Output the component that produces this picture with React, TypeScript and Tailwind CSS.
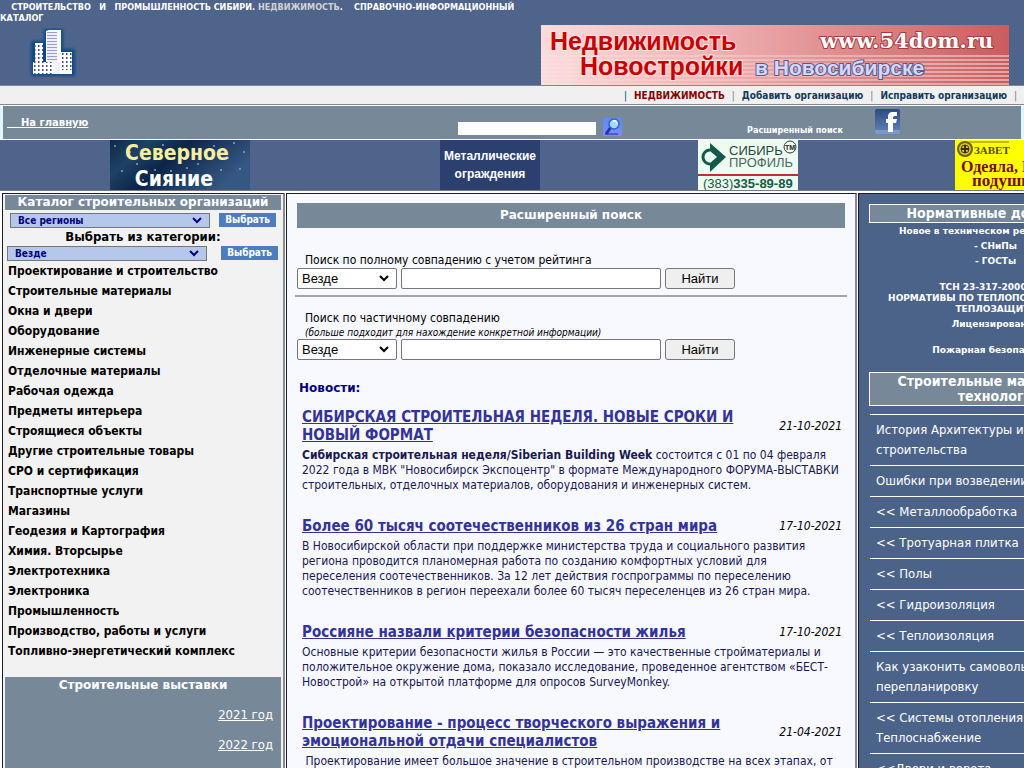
import type { ReactNode } from "react";

const CATEGORIES = [
  "Проектирование и строительство",
  "Строительные материалы",
  "Окна и двери",
  "Оборудование",
  "Инженерные системы",
  "Отделочные материалы",
  "Рабочая одежда",
  "Предметы интерьера",
  "Строящиеся объекты",
  "Другие строительные товары",
  "СРО и сертификация",
  "Транспортные услуги",
  "Магазины",
  "Геодезия и Картография",
  "Химия. Вторсырье",
  "Электротехника",
  "Электроника",
  "Промышленность",
  "Производство, работы и услуги",
  "Топливно-энергетический комплекс",
];

const NEWS: { title: string; date: string; body: ReactNode }[] = [
  {
    title: "СИБИРСКАЯ СТРОИТЕЛЬНАЯ НЕДЕЛЯ. НОВЫЕ СРОКИ И НОВЫЙ ФОРМАТ",
    date: "21-10-2021",
    body: (
      <>
        <b>Сибирская строительная неделя/Siberian Building Week</b> состоится с 01 по 04 февраля
        2022 года в МВК "Новосибирск Экспоцентр" в формате Международного ФОРУМА-ВЫСТАВКИ
        строительных, отделочных материалов, оборудования и инженерных систем.
      </>
    ),
  },
  {
    title: "Более 60 тысяч соотечественников из 26 стран мира",
    date: "17-10-2021",
    body: "В Новосибирской области при поддержке министерства труда и социального развития региона проводится планомерная работа по созданию комфортных условий для переселения соотечественников. За 12 лет действия госпрограммы по переселению соотечественников в регион переехали более 60 тысяч переселенцев из 26 стран мира.",
  },
  {
    title: "Россияне назвали критерии безопасности жилья",
    date: "17-10-2021",
    body: "Основные критерии безопасности жилья в России — это качественные стройматериалы и положительное окружение дома, показало исследование, проведенное агентством «БЕСТ-Новострой» на открытой платформе для опросов SurveyMonkey.",
  },
  {
    title: "Проектирование - процесс творческого выражения и эмоциональной отдачи специалистов",
    date: "21-04-2021",
    body: "\u00a0Проектирование имеет большое значение в строительном производстве на всех этапах, от",
  },
];

const MATERIALS = [
  "История Архитектуры и строительства",
  "Ошибки при возведении",
  "<< Металлообработка",
  "<< Тротуарная плитка",
  "<< Полы",
  "<< Гидроизоляция",
  "<< Теплоизоляция",
  "Как узаконить самовольную перепланировку",
  "<< Системы отопления. Теплоснабжение",
  "<<Двери и ворота",
];

function CityLogo() {
  return (
    <svg width="48" height="50" viewBox="0 0 48 50" aria-hidden="true">
      <defs>
        <filter id="glow" x="-20%" y="-20%" width="140%" height="140%">
          <feGaussianBlur stdDeviation="1.6" />
        </filter>
        <pattern id="win" width="4" height="4" patternUnits="userSpaceOnUse">
          <rect width="4" height="4" fill="#fff" />
          <rect x="1" y="1" width="1.5" height="2" fill="#4a4e80" />
        </pattern>
        <pattern id="floors" width="3" height="3" patternUnits="userSpaceOnUse">
          <rect width="3" height="3" fill="#eef" />
          <rect y="1" width="3" height="1" fill="#9aa0cc" />
        </pattern>
      </defs>
      <path d="M2 13h13V1h19v20h12v27H2z" fill="#084a84" filter="url(#glow)" />
      <rect x="6" y="15" width="8" height="20" fill="url(#win)" />
      <path d="M17 3l3-1h12v44H17z" fill="#fff" />
      <rect x="18" y="4" width="10" height="31" fill="url(#floors)" />
      <path d="M31 24h12v22H31z" fill="url(#win)" />
      <path d="M31 42h12v4H31z" fill="#fff" />
      <path d="M4 34h20v12H4z" fill="url(#win)" />
      <path d="M24 34h7v12h-7z" fill="#f3f3ff" />
    </svg>
  );
}

function DomBanner() {
  return (
    <svg width="468" height="60" viewBox="0 0 468 60" role="img" aria-label="www.54dom.ru">
      <defs>
        <linearGradient id="pink">
          <stop offset="0" stopColor="#fbdcdc" />
          <stop offset=".35" stopColor="#f0b4b4" />
          <stop offset="1" stopColor="#ca5c5e" />
        </linearGradient>
        <linearGradient id="stripe">
          <stop offset="0" stopColor="#fff" stopOpacity=".1" />
          <stop offset="1" stopColor="#fff" stopOpacity=".45" />
        </linearGradient>
      </defs>
      <rect width="468" height="60" fill="url(#pink)" />
      {[30, 34, 38, 42, 46, 50, 54, 58].map((y) => (
        <rect key={y} y={y} width="468" height="2" fill="url(#stripe)" />
      ))}
      <g fontFamily="Liberation Sans, sans-serif" fontWeight="700">
        <g fill="#c80000" stroke="#fbe4e4" strokeWidth="2" paintOrder="stroke" fontSize="25">
          <text x="9" y="25">Недвижимость</text>
          <text x="39" y="50">Новостройки</text>
        </g>
        <text x="214" y="50" fontSize="21" fill="#d4d8fa" stroke="#555b92" strokeWidth="2" paintOrder="stroke">
          в Новосибирске
        </text>
      </g>
      <text x="279" y="23" fontFamily="DejaVu Serif, serif" fontWeight="700" fontSize="21" fill="#fff" stroke="#a33b40" strokeWidth="2" paintOrder="stroke">
        www.54dom.ru
      </text>
    </svg>
  );
}

function NorthBanner() {
  const stars = [
    [5, 6], [12, 31], [20, 12], [33, 40], [45, 30], [61, 31], [77, 28], [70, 8], [88, 24],
    [96, 36], [104, 6], [111, 30], [118, 18], [124, 3], [130, 29], [134, 12], [27, 24], [53, 5],
  ];
  return (
    <svg width="140" height="50" viewBox="0 0 140 50" role="img" aria-label="Северное Сияние">
      <defs>
        <linearGradient id="night" x2="1" y2=".4">
          <stop offset="0" stopColor="#102844" />
          <stop offset=".25" stopColor="#1d4265" />
          <stop offset=".5" stopColor="#0d2448" />
          <stop offset="1" stopColor="#355783" />
        </linearGradient>
      </defs>
      <rect width="140" height="50" fill="url(#night)" />
      {stars.map(([x, y]) => (
        <circle key={`${x}-${y}`} cx={x} cy={y} r="1" fill="#86a5c9" />
      ))}
      <g fontFamily="DejaVu Sans Condensed, DejaVu Sans, sans-serif" fontWeight="700" fontSize="21" textAnchor="middle">
        <text x="67" y="20" fill="#f8eda0">Северное</text>
        <text x="64" y="46" fill="#fff">Сияние</text>
      </g>
    </svg>
  );
}

function ProfileBanner() {
  return (
    <svg width="100" height="50" viewBox="0 0 100 50" role="img" aria-label="Сибирь Профиль">
      <rect width="100" height="50" fill="#edfcf0" />
      <path d="M12 3l16 14-16 15z" fill="#155a48" />
      <circle cx="12" cy="17" r="7" fill="none" stroke="#155a48" strokeWidth="3" />
      <path d="M12 11l7 6-7 6z" fill="#edfcf0" />
      <g fontFamily="Liberation Sans, sans-serif">
        <text x="31" y="15" fontSize="13" fill="#27483e">СИБИРЬ</text>
        <text x="31" y="27" fontSize="13" fill="#4b675e">ПРОФИЛЬ</text>
        <circle cx="92" cy="7" r="6" fill="#edfcf0" stroke="#333" />
        <text x="92" y="10" fontSize="7" fontWeight="700" textAnchor="middle" fill="#222">TM</text>
        <rect y="34" width="100" height="2" fill="#c92b2e" />
        <text x="5" y="48" fontSize="13" fill="#155a48">
          (383)<tspan fontWeight="700">335-89-89</tspan>
        </text>
      </g>
    </svg>
  );
}

function ZavetBanner() {
  return (
    <svg width="100" height="50" viewBox="0 0 100 50" role="img" aria-label="Завет">
      <rect width="100" height="50" fill="#ff0" />
      <circle cx="10" cy="9" r="7" fill="#d8c820" stroke="#6e5c14" strokeWidth="2" />
      <circle cx="10" cy="9" r="4" fill="none" stroke="#4a3c10" />
      <path d="M10 5v8M6 9h8" stroke="#3a2c08" strokeWidth="2" />
      <path d="M14 2h40" stroke="#8a7a18" />
      <g fontFamily="Liberation Serif, serif" fontWeight="700" fill="#7a0a0a">
        <text x="19" y="14" fontSize="11" fill="#5a4614">ЗАВЕТ</text>
        <text x="6" y="32" fontSize="16">Одеяла, КПБ</text>
        <text x="17" y="46" fontSize="17">подушки</text>
      </g>
    </svg>
  );
}

function FacebookIcon() {
  return (
    <svg width="25" height="25" viewBox="0 0 25 25" aria-hidden="true">
      <defs>
        <linearGradient id="fb" x2="0" y2="1">
          <stop offset="0" stopColor="#2d4a80" />
          <stop offset="1" stopColor="#6584bd" />
        </linearGradient>
      </defs>
      <rect width="25" height="25" rx="2" fill="url(#fb)" />
      <path d="M0 21h25v2a2 2 0 0 1-2 2H2a2 2 0 0 1-2-2z" fill="#7c98c9" />
      <path d="M13 23v-9h-2v-4h2V8c0-4 2-5 5-5h4v4h-2c-2 0-2 1-2 2v1h4l-1 4h-3v9z" fill="#fff" />
    </svg>
  );
}

function LensIcon() {
  return (
    <svg width="19" height="18" viewBox="0 0 19 18" aria-hidden="true">
      <defs>
        <linearGradient id="lens" x2="0" y2="1">
          <stop offset="0" stopColor="#5b8cf0" />
          <stop offset="1" stopColor="#7c8cf8" />
        </linearGradient>
      </defs>
      <rect width="19" height="18" fill="url(#lens)" />
      <path d="M2 16h13" stroke="#4c5bd0" strokeWidth="2" />
      <path d="M8 9l-5 7" stroke="#2634a0" strokeWidth="3" />
      <circle cx="11" cy="6" r="5" fill="#9fd8fa" stroke="#3460cc" strokeWidth="1.5" />
      <path d="M10 3c3-1 4 1 4 3" stroke="#fff" strokeWidth="1.5" fill="none" />
    </svg>
  );
}

function Chevron({ className }: { className: string }) {
  return (
    <svg className={className} width="10" height="7" viewBox="0 0 10 7" aria-hidden="true">
      <path d="M1 1l4 4 4-4" fill="none" stroke="currentColor" strokeWidth="2" />
    </svg>
  );
}

function RegionPicker({ label, value, className }: { label: string; value: string; className: string }) {
  return (
    <form className={className}>
      <div className="relative text-[#000080]">
        <select
          aria-label={label}
          className="block h-[15px] w-[200px] appearance-none border border-[#767676] bg-[#b5c7ea] pl-1 pr-6 text-[10px] leading-[13px] font-bold indent-[3px]"
        >
          <option>{value}</option>
        </select>
        <Chevron className="pointer-events-none absolute top-1 right-2" />
      </div>
      <button type="button" className="h-[14px] w-[57px] bg-[#4d7dbf] text-[10px] leading-[14px] font-bold text-white">
        Выбрать
      </button>
    </form>
  );
}

function SearchForm({ label }: { label: string }) {
  return (
    <form className="flex gap-1 pl-[2px] font-['Liberation_Sans',sans-serif] text-[13px]">
      <div className="relative">
        <select
          aria-label={`Раздел: ${label}`}
          className="block h-[21px] w-[100px] appearance-none rounded-[2px] border border-[#767676] bg-white pl-1 leading-[19px]"
        >
          <option>Везде</option>
        </select>
        <Chevron className="pointer-events-none absolute top-[7px] right-2" />
      </div>
      <input aria-label={label} className="h-[21px] w-[260px] rounded-[2px] border border-[#767676] bg-white px-1" />
      <button type="button" className="h-[21px] w-[70px] rounded-[3px] border border-[#767676] bg-[#efefef] leading-[19px]">
        Найти
      </button>
    </form>
  );
}

function SidePanel() {
  return (
    <aside className="flex flex-col border-t border-r-2 border-l border-t-[#1c1c2c] border-r-[#8a8a92] border-l-[#1c1c2c] bg-[#f2f2f2] px-[2px] pt-px">
      <h2 className="bg-[#778899] text-center font-['DejaVu_Sans',sans-serif] text-[12px] leading-[15px] font-bold text-white">
        Каталог строительных организаций
      </h2>
      <RegionPicker label="Регион" value="Все регионы" className="flex gap-[9px] pt-[3px] pl-[5px]" />
      <p className="text-center text-[13px] leading-[18px] font-bold">Выбрать из категории:</p>
      <RegionPicker label="Категория" value="Везде" className="flex gap-[14px] pl-[2px]" />
      <ul className="pl-[3px] text-[12px] leading-5 font-bold">
        {CATEGORIES.map((c) => (
          <li key={c}>
            <a href="#">{c}</a>
          </li>
        ))}
      </ul>
      <section className="mt-4 flex-1 bg-[#778899] text-white">
        <h2 className="text-center font-['DejaVu_Sans',sans-serif] text-[12px] leading-4 font-bold">
          Строительные выставки
        </h2>
        <ul className="pt-[7px] pr-2 text-right text-[13px] leading-[30px] underline">
          <li>
            <a href="#">2021 год</a>
          </li>
          <li>
            <a href="#">2022 год</a>
          </li>
        </ul>
      </section>
    </aside>
  );
}

function Content() {
  return (
    <main className="border-t border-r-2 border-l border-t-[#1c1c2c] border-r-[#8a8a92] border-l-[#1c1c2c] bg-[#f8f8ff] px-2 pt-[9px] text-[12px]">
      <h1 className="mx-[2px] bg-[#778899] text-center font-['DejaVu_Sans',sans-serif] leading-[25px] font-bold text-white">
        Расширенный поиск
      </h1>
      <p className="pt-[25px] pl-[10px] leading-[15px]">Поиск по полному совпадению с учетом рейтинга</p>
      <SearchForm label="Поиск по полному совпадению" />
      <hr className="mt-[6px] border-t-2 border-[#a4a4aa]" />
      <p className="pt-[14px] pl-[10px] leading-[15px]">Поиск по частичному совпадению</p>
      <p className="pl-[10px] text-[10px] leading-[13px] italic">
        (больше подходит для нахождение конкретной информации)
      </p>
      <SearchForm label="Поиск по частичному совпадению" />
      <h2 className="mt-5 mb-3 pl-1 font-['DejaVu_Sans',sans-serif] leading-4 font-bold text-[#000080]">Новости:</h2>
      <div className="flex flex-col gap-6 pr-[5px] pl-[7px]">
        {NEWS.map((n) => (
          <article key={n.title}>
            <div className="flex items-center justify-between">
              <h3 className="w-[450px] text-[15px] leading-[18px] font-bold text-[#333399]">
                <a href="#" className="underline">
                  {n.title}
                </a>
              </h3>
              <time className="text-[12px] italic">{n.date}</time>
            </div>
            <p className="mt-1 text-[12px] leading-[15px] text-[#191950]">{n.body}</p>
          </article>
        ))}
      </div>
    </main>
  );
}

function RightPanel() {
  return (
    <aside className="border-t border-l border-[#1c1c2c] bg-[#4c6389] px-[10px] pt-[10px] text-white">
      <h2 className="border border-white bg-[#778899] text-center text-[14px] leading-[17px] font-bold">
        Нормативные документы
      </h2>
      <div className="pt-px pr-2 text-center font-['DejaVu_Sans',sans-serif] text-[9px] leading-[15px] font-bold">
        <p>Новое в техническом регулировании</p>
        <p>- СНиПы</p>
        <p>- ГОСТы</p>
        <p className="pt-[13px] pb-[2px] leading-[11px]">
          ТСН 23-317-2000 НСО
          <br />
          НОРМАТИВЫ ПО ТЕПЛОПОТРЕБЛЕНИЮ И
          <br />
          ТЕПЛОЗАЩИТЕ
        </p>
        <p>Лицензирование</p>
        <p className="pt-[11px]">Пожарная безопасность</p>
      </div>
      <h2 className="mt-[14px] mb-2 border border-white bg-[#778899] px-4 py-px text-center text-[14px] leading-[15px] font-bold">
        Строительные материалы и
        <br />
        технологии
      </h2>
      <ul className="ml-px text-[13px] leading-5">
        {MATERIALS.map((m) => (
          <li key={m} className="border-t border-white py-[5px] pr-[54px] pl-[6px]">
            <a href="#">{m}</a>
          </li>
        ))}
      </ul>
    </aside>
  );
}

export default function App() {
  return (
    <div className="h-screen overflow-hidden bg-white font-['DejaVu_Sans_Condensed','DejaVu_Sans',sans-serif] text-black">
      <header className="flex items-end justify-between border-b border-[#7b86a6] bg-[#4f648b] pr-[15px]">
        <div className="w-[541px] self-start pt-[2px]">
          <p className="text-[9px] leading-[11px] font-bold text-white">
            &nbsp;&nbsp;&nbsp; СТРОИТЕЛЬСТВО &nbsp; И &nbsp; ПРОМЫШЛЕННОСТЬ СИБИРИ.{" "}
            <span className="text-[#d3d3d3]">НЕДВИЖИМОСТЬ</span>. &nbsp;&nbsp; СПРАВОЧНО-ИНФОРМАЦИОННЫЙ
            <br />
            КАТАЛОГ
          </p>
          <a href="#" aria-label="Главная" className="ml-[29px] block pt-1">
            <CityLogo />
          </a>
        </div>
        <a href="#" className="mt-[25px] block">
          <DomBanner />
        </a>
      </header>

      <nav className="flex justify-end gap-[7px] border-b border-[#85859a] bg-[#f0f0f0] pt-[2px] pr-[7px] text-[10px] leading-4 font-bold text-[#123a5c]">
        <span className="font-normal">|</span>
        <a href="#" className="text-[#8b0000]">НЕДВИЖИМОСТЬ</a>
        <span className="font-normal text-[#807a70]">|</span>
        <a href="#">Добавить организацию</a>
        <span className="font-normal text-[#807a70]">|</span>
        <a href="#">Исправить организацию</a>
        <span className="font-normal text-[#807a70]">|</span>
      </nav>

      <div className="border-y border-white bg-[#e0f7fa] px-[3px]">
        <div className="flex h-[33px] items-end bg-[#778899] pb-[3px] pl-1 text-white">
          <a href="#" className="w-[451px] pb-[6px] font-['DejaVu_Sans',sans-serif] text-[10px] leading-[14px] font-bold underline">
            &nbsp;&nbsp;&nbsp;&nbsp;На главную
          </a>
          <input aria-label="Поиск" className="mb-px h-[13px] w-[138px] bg-white px-1 text-[10px] text-black" />
          <button type="button" aria-label="Найти" className="ml-[7px]">
            <LensIcon />
          </button>
          <a href="#" className="ml-[125px] text-[9px] leading-[12px] font-bold">
            Расширенный поиск
          </a>
          <a href="#" aria-label="Facebook" className="mr-[121px] mb-[2px] ml-auto">
            <FacebookIcon />
          </a>
        </div>
      </div>

      <div className="grid min-w-[1140px] grid-cols-[360px_260px_256px_258px] justify-items-center border-b border-[#777788] bg-[#4f648b]">
        <a href="#">
          <NorthBanner />
        </a>
        <a href="#" className="w-[100px] bg-[#2c4070] pt-[7px] text-center font-['Liberation_Sans',sans-serif] text-[12px] leading-[18px] font-bold text-white">
          Металлические ограждения
        </a>
        <a href="#">
          <ProfileBanner />
        </a>
        <a href="#">
          <ZavetBanner />
        </a>
      </div>

      <div className="grid min-h-[600px] min-w-[1140px] grid-cols-[283px_1fr_282px] gap-px pt-[2px] pl-[2px]">
        <SidePanel />
        <Content />
        <RightPanel />
      </div>
    </div>
  );
}
